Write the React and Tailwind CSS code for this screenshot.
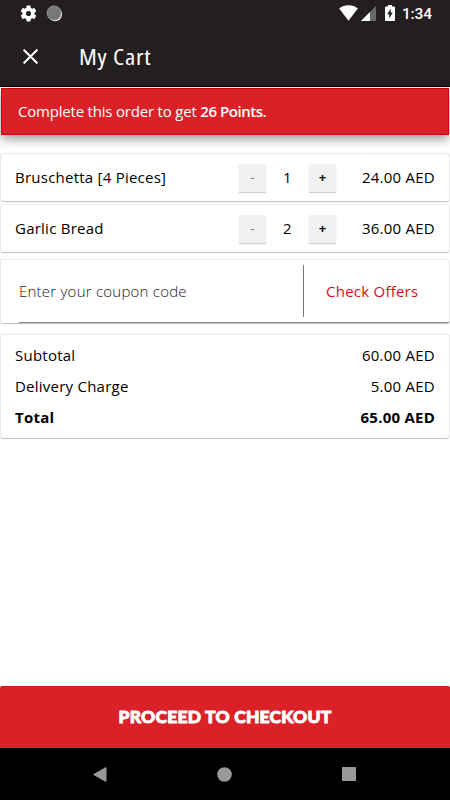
import React, { useState } from "react";

// ================= DATA =================
const START_ITEMS = [
  { id: "i1", name: "Bruschetta [4 Pieces]", price: 24, qty: 1 },
  { id: "i2", name: "Garlic Bread", price: 18, qty: 2 },
];

const DELIVERY_CHARGE = 5;

// ================= HELPERS =================
const money = (n) => `${n.toFixed(2)} AED`;

const CARD = "mx-px rounded-xs bg-white border-t border-t-[#eeeeee] shadow-[0_1px_1px_#bdbdbd,1px_0_1px_#ececec,-1px_0_1px_#ececec]";

// ================= STATUS BAR =================
const StatusBar = () => (
  <div className="h-[26px] flex items-center justify-between pl-[19px] pr-[18px]">
    <div className="flex items-center gap-[8px]">
      <svg width="19" height="19" viewBox="0 0 24 24" fill="#fff">
        <path d="M19.43 12.98c.04-.32.07-.64.07-.98s-.03-.66-.07-.98l2.11-1.65c.19-.15.24-.42.12-.64l-2-3.46c-.12-.22-.39-.3-.61-.22l-2.49 1c-.52-.4-1.08-.73-1.69-.98l-.38-2.65C14.46 2.18 14.25 2 14 2h-4c-.25 0-.46.18-.49.42l-.38 2.65c-.61.25-1.17.59-1.69.98l-2.49-1c-.23-.09-.49 0-.61.22l-2 3.46c-.13.22-.07.49.12.64l2.11 1.65c-.04.32-.07.65-.07.98s.03.66.07.98l-2.11 1.65c-.19.15-.24.42-.12.64l2 3.46c.12.22.39.3.61.22l2.49-1c.52.4 1.08.73 1.69.98l.38 2.65c.03.24.24.42.49.42h4c.25 0 .46-.18.49-.42l.38-2.65c.61-.25 1.17-.59 1.69-.98l2.49 1c.23.09.49 0 .61-.22l2-3.46c.12-.22.07-.49-.12-.64zM12 15.2a3.2 3.2 0 1 1 0-6.400 3.2 3.2 0 0 1 0 6.400z" />
      </svg>
      <svg width="17" height="17" viewBox="0 0 17 17">
        <circle cx="9" cy="9.200" r="7" fill="#fff" />
        <circle cx="8" cy="8" r="7.400" fill="#777" />
        <circle cx="8" cy="8" r="6.800" fill="none" stroke="#a8a8a8" strokeWidth="1" strokeDasharray="1 1" />
      </svg>
    </div>
    <div className="flex items-center">
      <svg width="19" height="16" viewBox="0 0 19 16" fill="#fff">
        <path d="M9.500 15.800.2 3.600C2.800 1.400 6 .3 9.500.3s6.700 1.100 9.300 3.300z" />
      </svg>
      <svg width="15" height="15" viewBox="0 0 15 15" className="ml-[3px]">
        <path d="M0 15 15 0v15z" fill="#6b6869" />
        <path d="M0 15 9 6v9z" fill="#fff" />
      </svg>
      <svg width="10" height="16" viewBox="0 0 10 16" className="ml-[9px]">
        <path d="M1 1.500h2V0h4v1.500h2q1 0 1 1V15q0 1-1 1H1q-1 0-1-1V2.500q0-1 1-1z" fill="#fff" />
        <path d="M5.700 3.500 2.200 9.300h2v4.200l3.600-6h-2.100z" fill="#231f20" />
      </svg>
      <span className="ml-[7px] pt-[3px] font-['Roboto'] font-medium text-[15.500px] leading-none text-white tracking-[-0.1px]">1:34</span>
    </div>
  </div>
);

// ================= QTY BUTTON =================
const QtyButton = ({ label, muted, onClick }) => (
  <button
    onClick={onClick}
    className={`w-[27px] h-[28px] flex items-center justify-center bg-[#f1f1f1] shadow-[0_1px_1px_#d2d2d2] text-[13px] ${muted ? "text-[#777777]" : "text-black font-bold"}`}
  >
    {label}
  </button>
);

// ================= APP =================
export default function App() {
  const [items, setItems] = useState(START_ITEMS);
  const [coupon, setCoupon] = useState("");

  const changeQty = (id, by) => {
    setItems(items.map((i) => (i.id === id ? { ...i, qty: Math.max(1, i.qty + by) } : i)));
  };

  const subtotal = items.reduce((sum, i) => sum + i.price * i.qty, 0);

  return (
    <div className="w-[450px] h-[800px] flex flex-col bg-white overflow-hidden font-['Open_Sans',sans-serif] text-[15px] tracking-[0.24px] text-black">
      {/* Header */}
      <header className="h-[87px] shrink-0 bg-[#231f20] border-b border-black">
        <StatusBar />
        <div className="h-[61px] flex items-center pl-[23px]">
          <svg width="15" height="15" viewBox="0 0 15 15" stroke="#fff" strokeWidth="2">
            <path d="M.6.6l13.800 13.800M14.400.6.6 14.400" />
          </svg>
          <h1 className="ml-[41px] pb-[2px] origin-left scale-x-[1.14] font-['Open_Sans',sans-serif] [font-stretch:80%] text-[22px] leading-none tracking-[0.700px] text-white">My Cart</h1>
        </div>
      </header>

      {/* Points banner */}
      <div className="mx-px mt-px h-[47px] shrink-0 flex items-center pl-[16px] bg-[#da2128] border border-[#d0040b] shadow-[0_4px_10px_rgba(0,0,0,0.4)] text-white tracking-[-0.200px]">
        <p>Complete this order to get <span className="font-semibold tracking-[-0.450px]">26 Points.</span></p>
      </div>

      {/* Cart items */}
      <div className="mt-[18px] flex flex-col gap-[3px]">
        {items.map((item) => (
          <div key={item.id} className={`${CARD} h-[48px] flex items-center pl-[14px] pr-[14px]`}>
            <span className="flex-1 pb-px">{item.name}</span>
            <QtyButton label="-" muted onClick={() => changeQty(item.id, -1)} />
            <span className="w-[43px] pb-px text-center">{item.qty}</span>
            <QtyButton label="+" onClick={() => changeQty(item.id, 1)} />
            <span className="w-[99px] pb-px text-right">{money(item.price * item.qty)}</span>
          </div>
        ))}
      </div>

      {/* Coupon */}
      <div className={`${CARD} mt-[7px] h-[64px] shrink-0 pl-[18px]`}>
        <div className="h-[63px] flex items-center border-b border-[#888888]">
          <input
            value={coupon}
            onChange={(e) => setCoupon(e.target.value)}
            placeholder="Enter your coupon code"
            className="w-[284px] outline-none font-light tracking-[0.230px] placeholder:text-[#222222] placeholder:opacity-100"
          />
          <div className="w-px h-[52px] bg-[#777777]" />
          <button className="ml-[22px] text-[#da0d14]">Check Offers</button>
        </div>
      </div>

      {/* Totals */}
      <div className={`${CARD} mt-[11px] h-[104px] shrink-0 pl-[14px] pr-[14px] pt-[5px] leading-[31px]`}>
        <div className="flex justify-between"><span>Subtotal</span><span>{money(subtotal)}</span></div>
        <div className="flex justify-between"><span>Delivery Charge</span><span>{money(DELIVERY_CHARGE)}</span></div>
        <div className="flex justify-between font-bold"><span>Total</span><span>{money(subtotal + DELIVERY_CHARGE)}</span></div>
      </div>

      {/* Checkout */}
      <button className="mt-auto h-[62px] shrink-0 bg-[#da2128] border-t border-[#c9151c] rounded-t-xs text-white text-[17.500px] font-['Lato',sans-serif] font-black tracking-[0.200px] [-webkit-text-stroke:0.900px_white]">
        PROCEED TO CHECKOUT
      </button>

      {/* Android navigation */}
      <nav className="h-[52px] shrink-0 bg-black flex items-center justify-between pl-[93px] pr-[94px]">
        <svg width="14" height="15" viewBox="0 0 14 15" fill="#999"><path d="M13 .5v14L.7 7.500z" stroke="#999" strokeLinejoin="round" /></svg>
        <svg width="15" height="15" viewBox="0 0 15 15" fill="#999"><circle cx="7.500" cy="7.500" r="7.300" /></svg>
        <svg width="14" height="14" viewBox="0 0 14 14" fill="#999"><rect width="14" height="14" rx="0.500" /></svg>
      </nav>
    </div>
  );
}
